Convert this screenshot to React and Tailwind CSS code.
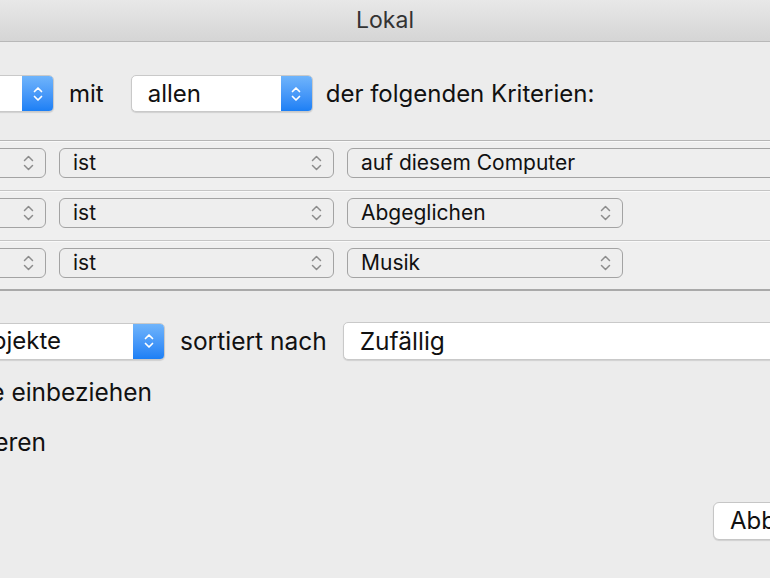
import React from "react";

const font = { fontFamily: "Inter, 'Noto Sans', sans-serif" };

function BlueChevrons() {
  return (
    <svg width="12" height="20" viewBox="0 0 12 20" fill="none" stroke="white" strokeWidth="1.7" strokeLinecap="round" strokeLinejoin="round">
      <path d="M2.5 7.5 L6 4 L9.5 7.5" />
      <path d="M2.5 12.5 L6 16 L9.5 12.5" />
    </svg>
  );
}

function GrayChevrons() {
  return (
    <svg width="11" height="18" viewBox="0 0 11 18" fill="none" stroke="#8c8c8c" strokeWidth="1.5" strokeLinecap="round" strokeLinejoin="round">
      <path d="M1.5 6.5 L5.5 2.5 L9.5 6.5" />
      <path d="M1.5 11.5 L5.5 15.5 L9.5 11.5" />
    </svg>
  );
}

function BluePopup({ className, label, textClass }) {
  return (
    <div className={"flex h-[37px] shrink-0 items-stretch overflow-hidden rounded-[5px] border border-[#c9c9c9] bg-white shadow-[0_1px_1px_rgba(0,0,0,0.12)] " + className}>
      <div className={"flex flex-1 items-center whitespace-nowrap text-[24px] text-[#111] " + (textClass || "")}>{label}</div>
      <div className="flex w-[31px] items-center justify-center bg-gradient-to-b from-[#6fb4fb] to-[#1b7ff5]">
        <BlueChevrons />
      </div>
    </div>
  );
}

function GrayPopup({ className, label, chevron = true }) {
  return (
    <div className={"flex h-[30px] shrink-0 items-center justify-between rounded-[6px] border-[1.5px] border-[#a3a3a3] bg-[#eeeeee] pl-[13px] pr-[11px] text-[21px] text-[#111] " + className}>
      <span className="whitespace-nowrap">{label}</span>
      {chevron && <GrayChevrons />}
    </div>
  );
}

function CriteriaRow({ value, valueWide, last }) {
  return (
    <div className={"flex h-[50px] items-start border-t border-t-[#f9f9f9] bg-[#efefef] pt-[6px] " + (last ? "border-b-[2px] border-b-[#a9a9a9]" : "border-b-[1.5px] border-b-[#c4c4c4]")}>
      <GrayPopup className="ml-[-54px] w-[100px]" label="" />
      <GrayPopup className="ml-[13px] w-[275px]" label="ist" />
      {valueWide ? (
        <GrayPopup className="ml-[13px] w-[460px]" label={value} chevron={false} />
      ) : (
        <GrayPopup className="ml-[13px] w-[276px]" label={value} />
      )}
    </div>
  );
}

export default function App() {
  return (
    <div className="h-[578px] w-[770px] overflow-hidden bg-[#ececec]" style={font}>
      <div className="flex h-[42px] items-center justify-center border-b border-b-[#b8b8b8] bg-gradient-to-b from-[#e8e8e8] to-[#d5d5d5] text-[23px] text-[#333]">
        Lokal
      </div>

      <div className="mt-[33px] flex h-[37px] items-center">
        <BluePopup className="ml-[-46px] w-[100px]" label="" />
        <span className="ml-[15px] text-[24px] text-[#111]">mit</span>
        <BluePopup className="ml-[27px] w-[182px]" label="allen" textClass="pl-[16px]" />
        <span className="ml-[13px] whitespace-nowrap text-[24px] text-[#111]">der folgenden Kriterien:</span>
      </div>

      <div className="mt-[28px] border-t border-t-[#b5b5b5]">
        <CriteriaRow value="auf diesem Computer" valueWide />
        <CriteriaRow value="Abgeglichen" />
        <CriteriaRow value="Musik" last />
      </div>

      <div className="mt-[31px] flex h-[38px] items-center">
        <BluePopup className="ml-[-90px] w-[255px]" label="Objekte" textClass="justify-end pr-[72px]" />
        <span className="ml-[15px] whitespace-nowrap text-[24.5px] text-[#111]">sortiert nach</span>
        <div className="ml-[16px] flex h-[38px] w-[460px] shrink-0 items-center rounded-[5px] border border-[#c9c9c9] bg-white pl-[16px] text-[24.5px] text-[#111] shadow-[0_1px_1px_rgba(0,0,0,0.12)]">
          Zufällig
        </div>
      </div>

      <div className="mt-[17px] flex w-[152px] justify-end whitespace-nowrap text-[24.5px] leading-[30px] text-[#111]">
        <span className="shrink-0">Nur abgehakte Objekte einbeziehen</span>
      </div>
      <div className="mt-[20px] flex w-[46px] justify-end whitespace-nowrap text-[24.5px] leading-[30px] text-[#111]">
        <span className="shrink-0">Live-Aktualisieren</span>
      </div>

      <div className="mt-[45px] flex">
        <div className="ml-[713px] flex h-[38px] w-[130px] shrink-0 items-center rounded-[6px] border border-[#c6c6c6] bg-white pl-[16px] text-[24px] text-[#111] shadow-[0_1px_1px_rgba(0,0,0,0.12)]">
          Abbrechen
        </div>
      </div>
    </div>
  );
}
